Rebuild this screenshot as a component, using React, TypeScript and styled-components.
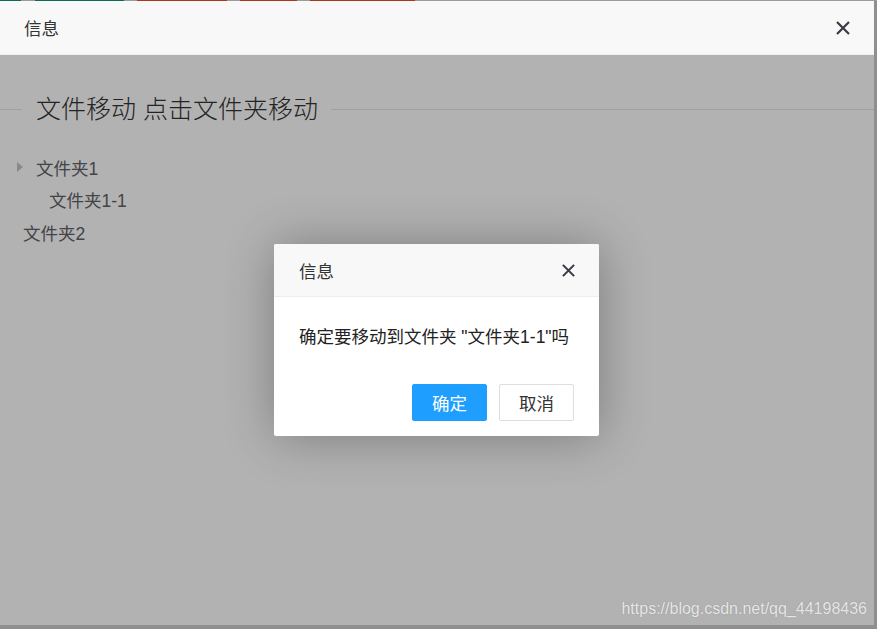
import React from "react";
import styled, { createGlobalStyle } from "styled-components";

const GlobalStyle = createGlobalStyle`
  html, body {
    margin: 0;
    padding: 0;
  }
  body {
    background: #8f8f8f;
    font-family: "Liberation Sans", "Noto Sans CJK SC", sans-serif;
  }
`;

const Desktop = styled.div`
  position: relative;
  width: 877px;
  height: 629px;
  overflow: hidden;
  background: #8f8f8f;
`;

const TabStrip = styled.div`
  display: flex;
  height: 1px;
  background: #9a9a9a;
`;

const TabMark = styled.div<{ $w: number; $color: string }>`
  width: ${(p) => p.$w}px;
  background: ${(p) => p.$color};
`;

const LayerWindow = styled.div`
  display: flex;
  flex-direction: column;
  width: 874px;
  height: 624px;
  background: #fff;
`;

const WindowHeader = styled.div`
  display: flex;
  align-items: center;
  justify-content: space-between;
  flex: 0 0 auto;
  height: 53px;
  padding: 0 23px 0 24px;
  background: #f8f8f8;
  border-bottom: 1px solid #eee;
  font-size: 17.5px;
  color: #333;
`;

const CloseButton = styled.button<{ $size: number }>`
  display: flex;
  padding: 0;
  border: none;
  background: none;
  cursor: pointer;
  color: #3a3a44;
  width: ${(p) => p.$size}px;
  height: ${(p) => p.$size}px;
`;

const FrameBody = styled.div`
  position: relative;
  flex: 1;
  background: #fff;
`;

const Field = styled.fieldset`
  margin: 39px 0 0;
  padding: 0;
  border: none;
  border-top: 1px solid #e6e6e6;
`;

const Legend = styled.legend`
  margin-left: 22px;
  padding: 0 13px 0 14px;
  font-size: 25px;
  font-weight: 300;
  line-height: 30px;
  color: #333;
`;

const Tree = styled.ul`
  list-style: none;
  margin: 27px 0 0;
  padding: 0;
  font-size: 17.5px;
  color: #606266;
`;

const TreeRow = styled.li<{ $indent: number }>`
  display: flex;
  align-items: center;
  height: 32.5px;
  padding-left: ${(p) => p.$indent}px;
`;

const Caret = styled.span`
  width: 0;
  height: 0;
  margin-right: 13px;
  border-left: 6px solid #c0c4cc;
  border-top: 5px solid transparent;
  border-bottom: 5px solid transparent;
`;

const Shade = styled.div`
  position: absolute;
  inset: 0;
  display: flex;
  align-items: center;
  justify-content: center;
  padding-right: 1px;
  background: rgba(0, 0, 0, 0.3);
`;

const Dialog = styled.div`
  width: 325px;
  background: #fff;
  border-radius: 2px;
  box-shadow: 1px 1px 50px rgba(0, 0, 0, 0.3);
  overflow: hidden;
`;

const DialogHeader = styled.div`
  display: flex;
  align-items: center;
  justify-content: space-between;
  height: 52px;
  padding: 0 23px 0 25px;
  background: #f8f8f8;
  border-bottom: 1px solid #eee;
  font-size: 17.5px;
  color: #333;
`;

const DialogBody = styled.div`
  padding: 25px;
  font-size: 17.5px;
  line-height: 30px;
  color: #222;
`;

const ButtonRow = styled.div`
  display: flex;
  justify-content: flex-end;
  gap: 12px;
  padding: 7px 25px 15px;
`;

const ActionButton = styled.button<{ $primary?: boolean }>`
  width: 75px;
  height: 37px;
  padding: 0;
  border-radius: 2px;
  font-family: inherit;
  font-size: 17.5px;
  cursor: pointer;
  border: 1px solid ${(p) => (p.$primary ? "#1e9fff" : "#dedede")};
  background: ${(p) => (p.$primary ? "#1e9fff" : "#fff")};
  color: ${(p) => (p.$primary ? "#fff" : "#333")};
`;

const Watermark = styled.div`
  position: absolute;
  right: 10px;
  bottom: 11px;
  font-family: "Liberation Sans", sans-serif;
  font-size: 16px;
  line-height: 18px;
  color: rgba(255, 255, 255, 0.8);
  text-shadow: 0 0 1px rgba(0, 0, 0, 0.25);
`;

const tabs = [
  { w: 21, color: "#0b6b5a" },
  { w: 14, color: "#9a9a9a" },
  { w: 89, color: "#0b6b5a" },
  { w: 13, color: "#9a9a9a" },
  { w: 90, color: "#a8391b" },
  { w: 13, color: "#9a9a9a" },
  { w: 57, color: "#a8391b" },
  { w: 13, color: "#9a9a9a" },
  { w: 105, color: "#a8391b" },
];

const CloseIcon = ({ size }: { size: number }) => (
  <CloseButton $size={size} aria-label="close">
    <svg width={size} height={size} viewBox="0 0 16 16">
      <path d="M2 2 L14 14 M14 2 L2 14" stroke="currentColor" strokeWidth="2.2" fill="none" />
    </svg>
  </CloseButton>
);

const App = () => {
  return (
    <>
      <GlobalStyle />
      <Desktop>
        <TabStrip>
          {tabs.map((t, i) => (
            <TabMark key={i} $w={t.w} $color={t.color} />
          ))}
        </TabStrip>
        <LayerWindow>
          <WindowHeader>
            <span>信息</span>
            <CloseIcon size={16} />
          </WindowHeader>
          <FrameBody>
            <Field>
              <Legend>文件移动 点击文件夹移动</Legend>
            </Field>
            <Tree>
              <TreeRow $indent={17}>
                <Caret />
                文件夹1
              </TreeRow>
              <TreeRow $indent={49}>文件夹1-1</TreeRow>
              <TreeRow $indent={23}>文件夹2</TreeRow>
            </Tree>
            <Shade>
              <Dialog>
                <DialogHeader>
                  <span>信息</span>
                  <CloseIcon size={15} />
                </DialogHeader>
                <DialogBody>确定要移动到文件夹 "文件夹1-1"吗</DialogBody>
                <ButtonRow>
                  <ActionButton $primary>确定</ActionButton>
                  <ActionButton>取消</ActionButton>
                </ButtonRow>
              </Dialog>
            </Shade>
          </FrameBody>
        </LayerWindow>
        <Watermark>https://blog.csdn.net/qq_44198436</Watermark>
      </Desktop>
    </>
  );
};

export default App;
